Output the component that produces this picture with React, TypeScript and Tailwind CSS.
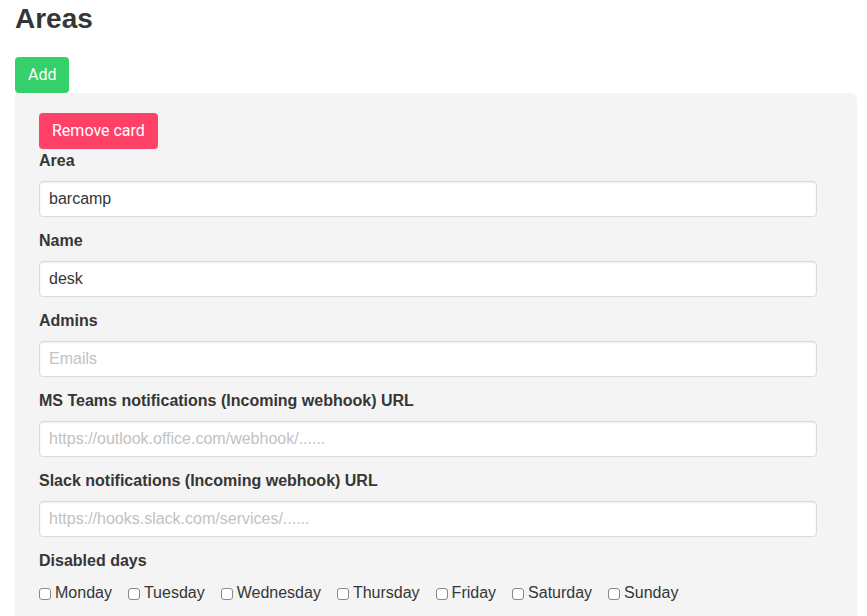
const days = ["Monday", "Tuesday", "Wednesday", "Thursday", "Friday", "Saturday", "Sunday"];

const fields = [
  { label: "Area", value: "barcamp", placeholder: "" },
  { label: "Name", value: "desk", placeholder: "" },
  { label: "Admins", value: "", placeholder: "Emails" },
  {
    label: "MS Teams notifications (Incoming webhook) URL",
    value: "",
    placeholder: "https://outlook.office.com/webhook/......",
  },
  {
    label: "Slack notifications (Incoming webhook) URL",
    value: "",
    placeholder: "https://hooks.slack.com/services/......",
  },
];

function Field({ label, value, placeholder }: { label: string; value: string; placeholder: string }) {
  return (
    <div className="mb-3">
      <label className="mb-2 block text-base font-bold leading-6 text-[#363636]">{label}</label>
      <input
        type="text"
        defaultValue={value}
        placeholder={placeholder}
        className="block h-9 w-[778px] rounded-[4px] border border-[#dbdbdb] bg-white px-[9px] text-base text-[#363636] shadow-[inset_0_1px_2px_rgba(10,10,10,0.08)] outline-none placeholder:text-[#c2c2c2]"
      />
    </div>
  );
}

export default function App() {
  return (
    <div className="min-h-[616px] bg-white pl-[15px] pr-[10px] font-['Liberation_Sans',Arial,sans-serif] text-[#363636]">
      <h1 className="pt-[3px] text-[28px] font-bold leading-[32px] text-[#363636]">Areas</h1>

      <button className="mt-[22px] h-9 rounded-[4px] bg-[#35d06b] px-[13px] font-['Roboto',sans-serif] text-base text-white">
        Add
      </button>

      <div className="rounded-tr-[6px] bg-[#f4f4f4] px-6 pb-6 pt-5">
        <button className="h-9 rounded-[4px] bg-[#ff4168] px-[13px] font-['Roboto',sans-serif] text-base text-white">
          Remove card
        </button>

        {fields.map((f) => (
          <Field key={f.label} {...f} />
        ))}

        <div>
          <div className="mb-2 text-base font-bold leading-6 text-[#363636]">Disabled days</div>
          <div className="flex items-center gap-4">
            {days.map((d) => (
              <label key={d} className="flex items-center text-base leading-6 text-[#363636]">
                <span className="mr-[4px] mt-px inline-block h-[12px] w-[12px] rounded-[3px] border border-[#8a8a8a] bg-white" />
                {d}
              </label>
            ))}
          </div>
        </div>
      </div>
    </div>
  );
}
